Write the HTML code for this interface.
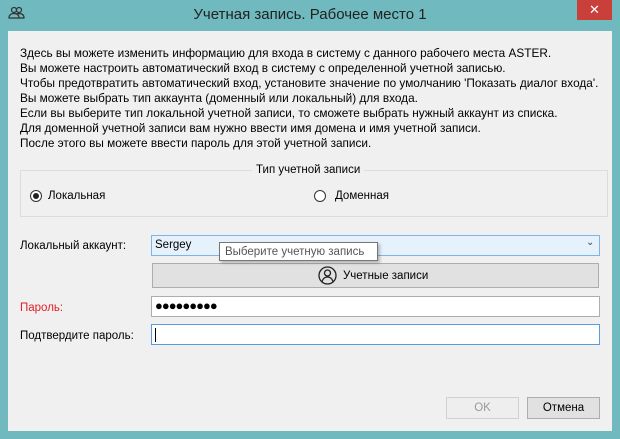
<!DOCTYPE html>
<html><head><meta charset="utf-8"><style>
*{margin:0;padding:0;box-sizing:border-box}
body{width:620px;height:439px;background:#6fb9bf;position:relative;overflow:hidden;font-family:"Liberation Sans","DejaVu Sans",sans-serif;font-size:11.5px;color:#000}
.abs{position:absolute}
.client{left:8px;top:31px;width:604px;height:400px;background:#f0f0f0}
.title{left:0;top:6px;width:620px;text-align:center;font-size:15px;color:#222}
.close{left:577px;top:0;width:35px;height:20px;background:#c9403a;color:#fff;text-align:center;font-size:13px;line-height:20px}
.txt{left:20px;top:46px;line-height:15px;font-size:11.8px;white-space:nowrap}
.grp{left:20px;top:170px;width:588px;height:47px;border:1px solid #dcdcdc}
.field{border:1px solid #abadb3;background:#fff}
</style></head><body>
<svg class="abs" style="left:8px;top:6px" width="18" height="14" viewBox="0 0 18 14"><g fill="none" stroke="#333" stroke-width="1.2"><circle cx="6" cy="4" r="2.5"/><circle cx="11" cy="4" r="2.5"/><path d="M1 12c0-3 2-4.5 5-4.5s5 1.5 5 4.5zM8 8c1-.5 2-.5 3-.5 3 0 5 1.5 5 4.5h-5"/></g></svg>
<div class="abs title">Учетная запись. Рабочее место 1</div>
<div class="abs close">✕</div>
<div class="abs client"></div>
<div class="abs txt">Здесь вы можете изменить информацию для входа в систему с данного рабочего места ASTER.<br>Вы можете настроить автоматический вход в систему с определенной учетной записью.<br>Чтобы предотвратить автоматический вход, установите значение по умолчанию 'Показать диалог входа'.<br>Вы можете выбрать тип аккаунта (доменный или локальный) для входа.<br>Если вы выберите тип локальной учетной записи, то сможете выбрать нужный аккаунт из списка.<br>Для доменной учетной записи вам нужно ввести имя домена и имя учетной записи.<br>После этого вы можете ввести пароль для этой учетной записи.</div>
<div class="abs grp"></div>
<div class="abs" style="left:252px;top:164px;padding:0 4px;background:#f0f0f0">Тип учетной записи</div>
<div class="abs" style="left:30px;top:190px;width:12px;height:12px;border:1px solid #333;border-radius:50%;background:#fff"><div style="margin:2px;width:6px;height:6px;border-radius:50%;background:#222"></div></div>
<div class="abs" style="left:48px;top:190px">Локальная</div>
<div class="abs" style="left:314px;top:190px;width:12px;height:12px;border:1px solid #333;border-radius:50%;background:#fff"></div>
<div class="abs" style="left:335px;top:190px">Доменная</div>
<div class="abs" style="left:20px;top:240px">Локальный аккаунт:</div>
<div class="abs" style="left:151px;top:235px;width:449px;height:21px;border:1px solid #7eb4ea;background:#e5f1fb"></div>
<div class="abs" style="left:155px;top:239px">Sergey</div>
<div class="abs" style="left:586px;top:237px;font-size:10px;color:#444">&#8964;</div>
<div class="abs" style="left:152px;top:263px;width:447px;height:25px;border:1px solid #adadad;background:#e1e1e1"></div>
<svg class="abs" style="left:318px;top:266px" width="19" height="19" viewBox="0 0 19 19"><g fill="none" stroke="#222" stroke-width="1.3"><circle cx="9.5" cy="9.5" r="8.5"/><circle cx="9.5" cy="7" r="3"/><path d="M4 15.5c1-3 3-4.5 5.5-4.5s4.5 1.5 5.5 4.5"/></g></svg>
<div class="abs" style="left:343px;top:270px">Учетные записи</div>
<div class="abs" style="left:219px;top:242px;width:159px;height:19px;border:1px solid #767676;background:#fff;box-shadow:2px 2px 3px rgba(0,0,0,.25);padding:3px 5px;color:#555;white-space:nowrap">Выберите учетную запись</div>
<div class="abs" style="left:20px;top:302px;color:#e0202a">Пароль:</div>
<div class="abs field" style="left:151px;top:296px;width:449px;height:21px"></div>
<div class="abs" style="left:155px;top:298px;font-size:13px;letter-spacing:-1px;font-weight:bold">●●●●●●●●●</div>
<div class="abs" style="left:20px;top:330px">Подтвердите пароль:</div>
<div class="abs field" style="left:151px;top:324px;width:449px;height:21px;border-color:#569de5"></div>
<div class="abs" style="left:155px;top:328px;width:1px;height:14px;background:#000"></div>
<div class="abs" style="left:446px;top:397px;width:73px;height:22px;border:1px solid #d0d0d0;background:#eee;color:#999;text-align:center;line-height:20px">OK</div>
<div class="abs" style="left:527px;top:397px;width:73px;height:22px;border:1px solid #adadad;background:#e1e1e1;text-align:center;line-height:20px">Отмена</div>
</body></html>
